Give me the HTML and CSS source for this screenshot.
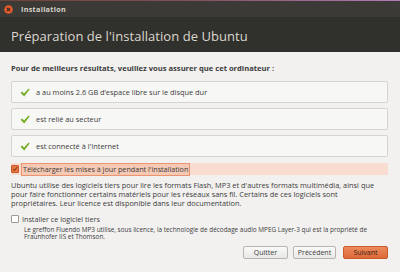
FILE: index.html
```html
<!doctype html>
<html>
<head>
<meta charset="UTF-8">
<title>Installation</title>
<link rel="stylesheet" href="styles.css">
</head>
<body>
<div class="win">
	<div class="edge"></div>
	<div class="titlebar">
		<span class="close"><svg width="9" height="9" viewBox="0 0 9 9"><circle cx="4.5" cy="4.5" r="4.3" fill="#e35b2c"/><path d="M3 3L6 6M6 3L3 6" stroke="#3a2a22" stroke-width="1.1"/></svg></span>
		<span class="wtitle">Installation</span>
	</div>
	<div class="header">
		<h1>Préparation de l'installation de Ubuntu</h1>
	</div>
	<div class="main">
		<p class="lead">Pour de meilleurs résultats, veuillez vous assurer que cet ordinateur :</p>
		<ul class="reqs">
			<li><svg class="tick" width="10" height="9" viewBox="0 0 10 9"><path d="M0.5 4.8L2.2 3.6L4 5.6L8.6 0.6L9.6 1.4L4.2 8.4Z" fill="#77ad28"/></svg>a au moins 2.6 GB d’espace libre sur le disque dur</li>
			<li><svg class="tick" width="10" height="9" viewBox="0 0 10 9"><path d="M0.5 4.8L2.2 3.6L4 5.6L8.6 0.6L9.6 1.4L4.2 8.4Z" fill="#77ad28"/></svg>est relié au secteur</li>
			<li><svg class="tick" width="10" height="9" viewBox="0 0 10 9"><path d="M0.5 4.8L2.2 3.6L4 5.6L8.6 0.6L9.6 1.4L4.2 8.4Z" fill="#77ad28"/></svg>est connecté à l'Internet</li>
		</ul>
		<div class="opt active">
			<span class="cb on"><svg width="8" height="8" viewBox="0 0 8 8"><path d="M1.2 4.2L3.2 6.2L6.8 1.6" stroke="#5a2a14" stroke-width="1.3" fill="none"/></svg></span>
			<span class="lbl">Télécharger les mises à jour pendant l'installation</span>
		</div>
		<p class="info">Ubuntu utilise des logiciels tiers pour lire les formats Flash, MP3 et d'autres formats multimédia, ainsi que pour faire fonctionner certains matériels pour les réseaux sans fil. Certains de ces logiciels sont<br>propriétaires. Leur licence est disponible dans leur documentation.</p>
		<div class="opt">
			<span class="cb"></span>
			<span class="lbl">Installer ce logiciel tiers</span>
		</div>
		<p class="note">Le greffon Fluendo MP3 utilise, sous licence, la technologie de décodage audio MPEG Layer-3 qui est la propriété de Fraunhofer IIS et Thomson.</p>
		<div class="actions">
			<button class="btn">Quitter</button>
			<button class="btn prev">Précédent</button>
			<button class="btn go">Suivant</button>
		</div>
	</div>
</div>
</body>
</html>
```
FILE: styles.css
```css
*{margin:0;padding:0;list-style:none;box-sizing:border-box;}
body{width:400px;height:272px;overflow:hidden;background:#f2f1f0;font-family:"Open Sans","Noto Sans",sans-serif;color:#3c3c3c;}
.win{width:400px;height:272px;display:flex;flex-direction:column;}
.edge{height:1px;background:linear-gradient(90deg,#6a4638,#7c5058 45%,#b77ab8);}
.titlebar{height:16px;background:#3b3a36;display:flex;align-items:center;padding-left:4px;gap:8px;}
.close{display:flex;}
.wtitle{font-size:7.2px;font-weight:bold;color:#d9d5cc;letter-spacing:0.3px;}
.header{height:35px;background:#30302c;display:flex;align-items:center;padding:2px 0 0 11px;}
.header h1{font-size:13px;font-weight:normal;color:#dcd8cf;letter-spacing:0.05px;}
.main{padding:11px 12px 0 11px;display:flex;flex-direction:column;}
.lead{font-size:7.6px;font-weight:bold;color:#3c3c3c;line-height:10px;}
.reqs{margin-top:8px;display:flex;flex-direction:column;gap:5px;}
.reqs li{height:22px;border:1px solid #d6d4d0;border-radius:2px;background:#f7f7f6;display:flex;align-items:center;padding-left:8px;font-size:7.4px;color:#3c3c3c;}
.tick{margin-right:6px;}
.opt{display:flex;align-items:center;height:12px;font-size:7.2px;}
.opt.active{margin-top:6px;background:#f8dccf;}
.opt .lbl{padding:0 1px;line-height:11px;}
.opt.active .lbl{border:1px solid #eb9470;background:#f5c9b4;}
.cb{width:8px;height:8px;border:1px solid #9d9a95;border-radius:1px;background:#fff;margin-right:2px;display:flex;align-items:center;justify-content:center;}
.cb.on{background:#e8763e;border-color:#c8572a;}
.info{margin-top:6px;font-size:7.4px;line-height:9px;color:#3c3c3c;}
.opt:not(.active){margin-top:5px;}
.note{margin:1px 0 0 13px;font-size:6.4px;line-height:7px;color:#3c3c3c;}
.actions{margin-top:6px;display:flex;justify-content:flex-end;gap:5px;}
.btn{height:13px;width:45px;font-family:inherit;font-size:7px;color:#3c3c3c;border:1px solid #b8b5af;border-radius:2px;background:linear-gradient(#fafaf9,#e9e8e6);}
.prev{width:43px;}
.go{margin-left:2px;background:linear-gradient(#ee8a5c,#dd6a38);border-color:#c85a2c;color:#3a2018;}
```
